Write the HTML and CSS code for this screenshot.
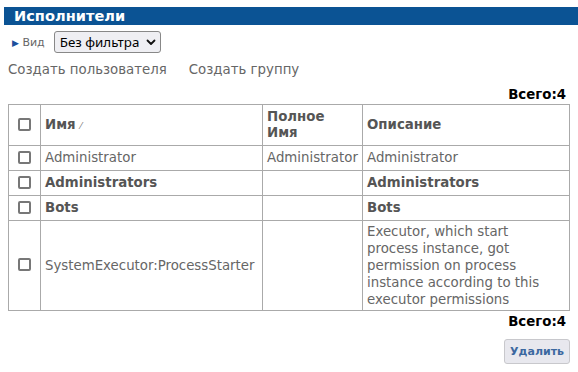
FILE: index.html
```html
<!DOCTYPE html>
<html>
<head>
<meta charset="utf-8">
<link rel="stylesheet" href="styles.css">
</head>
<body>
<div class="page">
  <div class="title">Исполнители</div>
  <div class="filter">
    <span class="toggle"><span class="tri">&#9654;</span> Вид</span>
    <div class="sel"><span>Без фильтра</span><svg class="chev" width="10" height="7" viewBox="0 0 10 7"><path d="M1.5 1.5 L5 5 L8.5 1.5" fill="none" stroke="#111" stroke-width="1.8" stroke-linecap="round" stroke-linejoin="round"/></svg></div>
  </div>
  <div class="links">
    <a class="lnk">Создать пользователя</a>
    <a class="lnk">Создать группу</a>
  </div>
  <div class="total">Всего:4</div>
  <table class="grid">
    <thead>
      <tr>
        <th class="cb"><span class="box"></span></th>
        <th class="c-name">Имя <span class="sort">&#8260;</span></th>
        <th class="c-full">Полное Имя</th>
        <th class="c-desc">Описание</th>
      </tr>
    </thead>
    <tbody>
      <tr>
        <td class="cb"><span class="box"></span></td>
        <td>Administrator</td>
        <td>Administrator</td>
        <td>Administrator</td>
      </tr>
      <tr class="group">
        <td class="cb"><span class="box"></span></td>
        <td>Administrators</td>
        <td></td>
        <td>Administrators</td>
      </tr>
      <tr class="group">
        <td class="cb"><span class="box"></span></td>
        <td>Bots</td>
        <td></td>
        <td>Bots</td>
      </tr>
      <tr class="tall">
        <td class="cb"><span class="box"></span></td>
        <td>SystemExecutor:ProcessStarter</td>
        <td></td>
        <td><div class="desc">Executor, which start process instance, got permission on process instance according to this executor permissions</div></td>
      </tr>
    </tbody>
  </table>
  <div class="total total2">Всего:4</div>
  <div class="actions"><button class="btn">Удалить</button></div>
</div>
</body>
</html>
```
FILE: styles.css
```css
html, body { margin: 0; padding: 0; background: #fff; }
body { font-family: "DejaVu Sans", Verdana, sans-serif; font-size: 13.33px; color: #666; }
.page { padding: 7px 8px 0 8px; }
.title {
  margin-left: -4px;
  margin-right: -8px;
  background: #0b5394;
  color: #fff;
  font-weight: bold;
  font-size: 14.6px;
  line-height: 18px;
  height: 18px;
  padding-left: 10px;
}
.filter { display: flex; align-items: center; margin-top: 6px; height: 22px; }
.toggle { font-size: 11px; color: #666; padding-left: 4px; margin-right: 9px; }
.tri { color: #1c4f9c; font-size: 9px; }
.sel {
  display: flex;
  align-items: center;
  justify-content: space-between;
  box-sizing: border-box;
  width: 107px;
  height: 22px;
  color: #000;
  font-family: "Noto Sans", "DejaVu Sans", sans-serif;
  font-size: 13.33px;
  white-space: nowrap;
  border: 1px solid #888;
  border-radius: 3px;
  background: #efeff3;
  padding: 0 4px 0 5px;
}
.chev { flex: none; margin-top: 1px; }
.links { display: flex; gap: 22px; margin-top: 8px; line-height: 18px; }
.lnk { color: #666; }
.total { text-align: right; font-weight: bold; color: #000; margin-top: 8px; line-height: 16px; padding-right: 4px; }
.grid { width: 562px; border-collapse: collapse; margin-top: 1px; }
.grid th, .grid td { border: 1px solid #aaa; padding: 4px 4px; text-align: left; vertical-align: middle; line-height: 16px; }
.grid th { font-weight: bold; color: #555; }
.grid tr.group td { font-weight: bold; color: #555; }
.grid tr.tall td { padding-top: 2px; padding-bottom: 2px; }
.cb { width: 23px; text-align: center !important; }
.c-name { width: 213px; }
.c-full { width: 91px; }
.desc { width: 175px; line-height: 17px; }
.box {
  display: inline-block;
  width: 9px; height: 9px;
  border: 2px solid #777;
  border-radius: 2px;
  vertical-align: middle;
  position: relative;
  top: -1px;
}
.sort { font-size: 9px; font-weight: normal; color: #777; }
.total2 { margin-top: 3px; }
.actions { display: flex; justify-content: flex-end; margin-top: 9px; }
.btn {
  font-family: "DejaVu Sans", sans-serif;
  font-weight: bold;
  font-size: 11px;
  color: #3c68a0;
  background: #e8e8ee;
  border: 1px solid #c8c8cc;
  border-radius: 3px;
  height: 25px;
  padding: 0 5px;
}
```
